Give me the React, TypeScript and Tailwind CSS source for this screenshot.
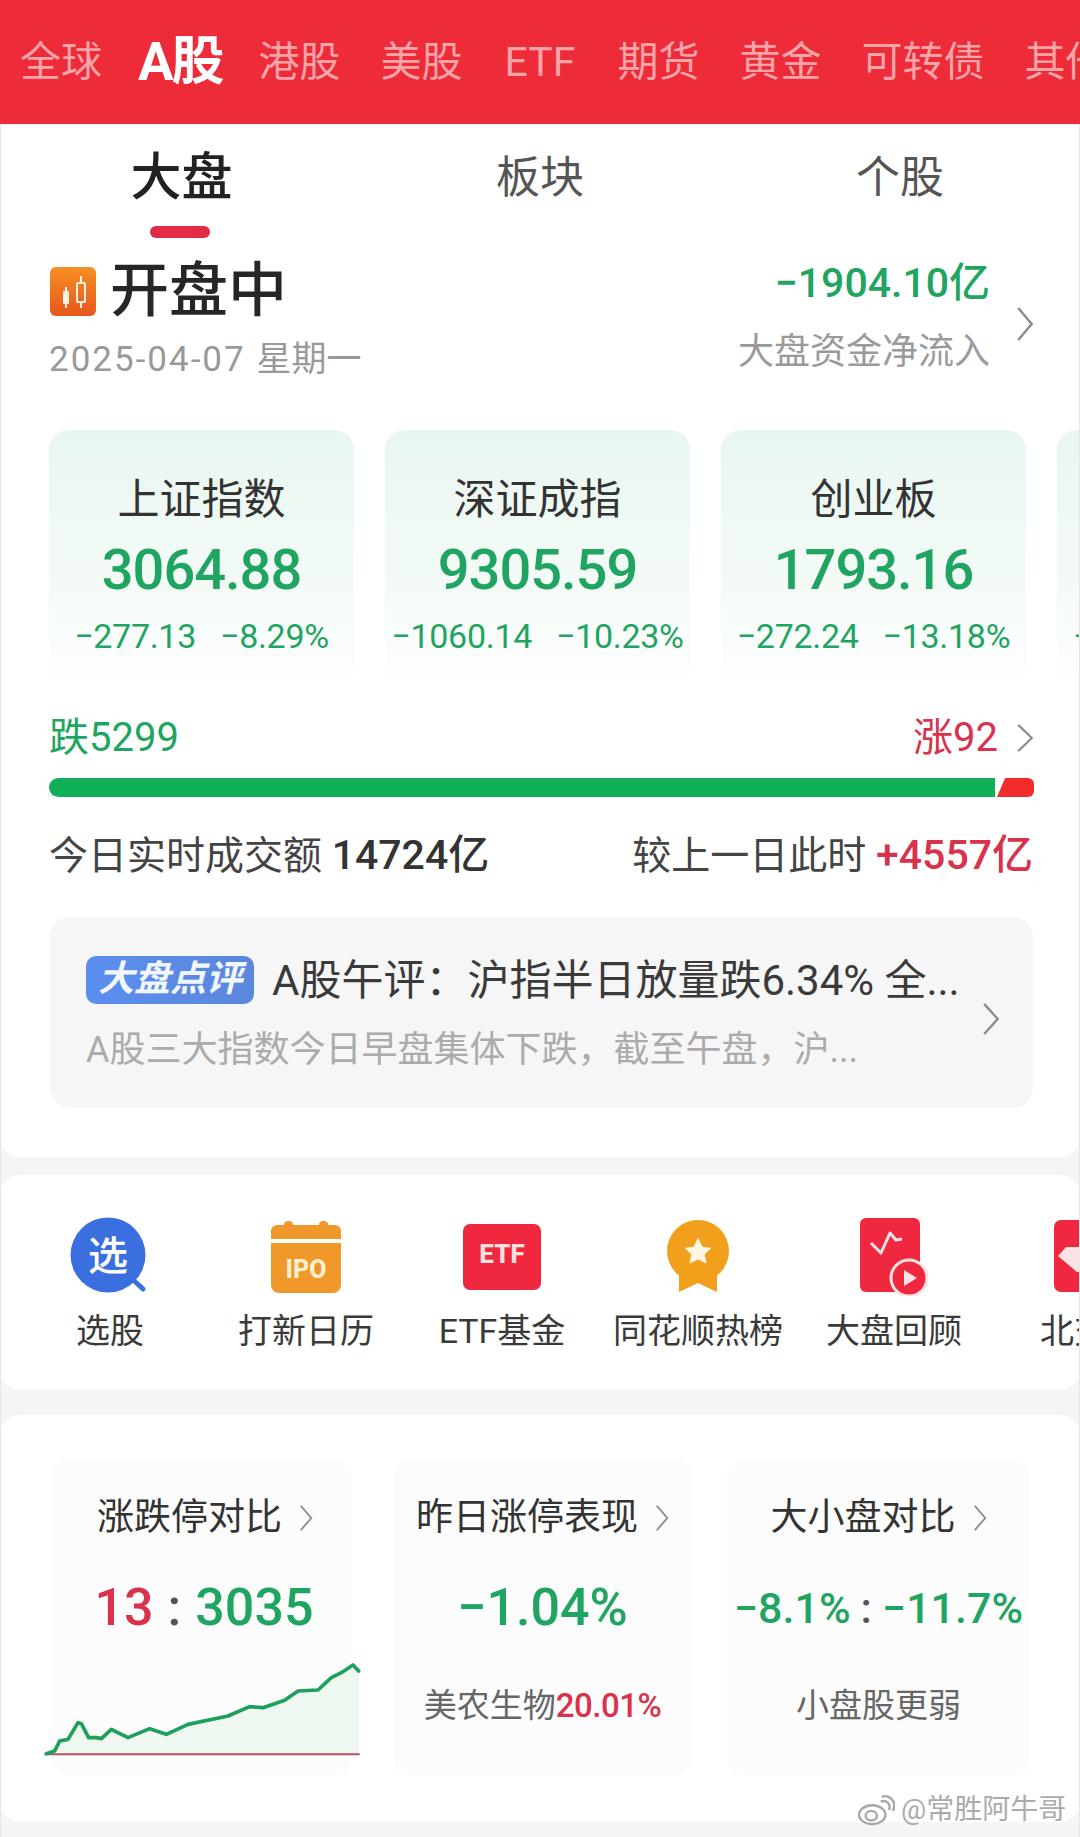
import React from "react";

const GREEN = "text-[#1fa561]";
const RED = "text-[#d8324c]";

function Chevron({ className = "" }: { className?: string }) {
  return (
    <svg viewBox="0 0 16 32" className={className} fill="none" stroke="#8d8d8d" strokeWidth="2.2" preserveAspectRatio="none">
      <polyline points="2,1 14,16 2,31" />
    </svg>
  );
}

const markets = ["全球", "A股", "港股", "美股", "ETF", "期货", "黄金", "可转债", "其他"];

const indices = [
  { name: "上证指数", value: "3064.88", change: "−277.13", pct: "−8.29%" },
  { name: "深证成指", value: "9305.59", change: "−1060.14", pct: "−10.23%" },
  { name: "创业板", value: "1793.16", change: "−272.24", pct: "−13.18%" },
  { name: "科创50", value: "", change: "−", pct: "" },
];

function CandleIcon() {
  return (
    <svg viewBox="0 0 46 49" className="w-[48px] h-[49px] shrink-0">
      <defs>
        <linearGradient id="candle" x1="0" y1="0" x2="0" y2="1">
          <stop offset="0" stopColor="#f59025" />
          <stop offset="1" stopColor="#e8561c" />
        </linearGradient>
      </defs>
      <rect width="46" height="49" rx="6" fill="url(#candle)" />
      <rect x="13" y="24" width="6" height="13" rx="1" fill="#fff3e0" />
      <rect x="15" y="20" width="2" height="21" fill="#fff3e0" />
      <rect x="27" y="16" width="8" height="19" rx="1" fill="none" stroke="#fff3e0" strokeWidth="2" />
      <rect x="30" y="9" width="2" height="7" fill="#fff3e0" />
      <rect x="30" y="35" width="2" height="6" fill="#fff3e0" />
    </svg>
  );
}

function SelectIcon() {
  return (
    <svg viewBox="0 0 80 80" className="w-[80px] h-[80px]">
      <line x1="60" y1="60" x2="73" y2="72" stroke="#3b6fe0" strokeWidth="5" strokeLinecap="round" />
      <circle cx="38" cy="38" r="37.5" fill="#3b6fe0" />
      <text x="38" y="53" textAnchor="middle" fontSize="40" fontWeight="500" fill="#fff" fontFamily="'Noto Sans CJK SC', sans-serif">
        选
      </text>
    </svg>
  );
}

function IpoIcon() {
  return (
    <svg viewBox="0 0 70 72" className="w-[70px] h-[72px]">
      <rect x="13" y="0" width="9" height="10" rx="4" fill="#f0982a" />
      <rect x="48" y="0" width="9" height="10" rx="4" fill="#f0982a" />
      <path d="M6 4 H64 A6 6 0 0 1 70 10 V18 H0 V10 A6 6 0 0 1 6 4Z" fill="#f0982a" />
      <path d="M0 22 H70 V64 A8 8 0 0 1 62 72 H8 A8 8 0 0 1 0 64Z" fill="#f0982a" />
      <text x="35" y="57" textAnchor="middle" fontSize="25" fontWeight="800" fill="#fdf0cf" fontFamily="Roboto, sans-serif">
        IPO
      </text>
    </svg>
  );
}

function EtfIcon() {
  return (
    <svg viewBox="0 0 78 66" className="w-[78px] h-[66px]">
      <rect width="78" height="66" rx="7" fill="#f0283f" />
      <text x="39" y="39" textAnchor="middle" fontSize="26" fontWeight="800" fill="#fbe0e0" fontFamily="Roboto, sans-serif">
        ETF
      </text>
    </svg>
  );
}

function MedalIcon() {
  return (
    <svg viewBox="0 0 62 74" className="w-[62px] h-[74px]">
      <path d="M12 50 L12 72 L31 63 L50 72 L50 50Z" fill="#f29f1c" />
      <circle cx="31" cy="31" r="31" fill="#f29f1c" />
      <path
        d="M31 15 L36 26 L47 27.5 L39 35 L41 46 L31 41 L21 46 L23 35 L15 27.5 L26 26Z"
        fill="#fdf6e3"
        stroke="#fdf6e3"
        strokeLinejoin="round"
        strokeWidth="1"
        transform="translate(6.2 6.2) scale(0.8)"
      />
    </svg>
  );
}

function ReplayIcon() {
  return (
    <svg viewBox="0 0 68 78" className="w-[68px] h-[78px]">
      <rect width="60" height="74" rx="6" fill="#f0283f" />
      <polyline points="11,25 21,35 30,15 36,22 42,21" fill="none" stroke="#fde3e3" strokeWidth="3" strokeLinejoin="round" />
      <circle cx="49" cy="60" r="18" fill="#f0283f" stroke="#fde3e3" strokeWidth="3" />
      <path d="M44 52 L57 60 L44 68Z" fill="#fde3e3" />
    </svg>
  );
}

function NorthIcon() {
  return (
    <svg viewBox="0 0 26 72" className="w-[26px] h-[72px] shrink-0">
      <rect width="70" height="72" rx="7" fill="#f0283f" />
      <path d="M12 27 H34 V52 L23 52 L4 36Z" fill="#fde3e3" />
    </svg>
  );
}

const shortcuts = [
  { label: "选股", icon: <SelectIcon /> },
  { label: "打新日历", icon: <IpoIcon /> },
  { label: "ETF基金", icon: <EtfIcon /> },
  { label: "同花顺热榜", icon: <MedalIcon /> },
  { label: "大盘回顾", icon: <ReplayIcon /> },
];

// Limit-up count through the session, in the chart's own 350x130 box (3x units)
const limitLine =
  "55,338 80,330 95,300 120,295 150,245 160,248 182,290 205,290 220,293 250,265 300,290 365,263 415,280 480,250 600,225 665,197 705,200 770,178 810,150 870,147 910,110 940,95 975,72 992,90";

function App() {
  return (
    <div
      className="relative w-[1080px] h-[1837px] overflow-hidden bg-[#f5f5f5] flex flex-col"
      style={{ fontFamily: "Roboto, 'Noto Sans CJK SC', sans-serif" }}
    >
      <header className="h-[124px] shrink-0 bg-[#ee2b39] flex items-center pl-[20px] gap-[40px] whitespace-nowrap">
        {markets.map((m) =>
          m === "A股" ? (
            <span key={m} className="-mx-[4px] text-[53px] leading-[60px] font-bold text-white tracking-[-2px]">
              {m}
            </span>
          ) : (
            <span key={m} className={`text-[41px] leading-[50px] text-[#f9a4a8] ${m === "ETF" ? "px-[2px]" : ""}`}>
              {m}
            </span>
          ),
        )}
      </header>

      <section className="h-[1033px] shrink-0 bg-white rounded-b-[20px]">
        <div className="grid grid-cols-3 pt-[24px]">
          <div className="flex flex-col items-center">
            <span className="ml-[3px] text-[51px] leading-[60px] font-medium text-[#222]">大盘</span>
            <span className="mt-[18px] h-[12px] w-[60px] rounded-full bg-[#e32b45]" />
          </div>
          <span className="text-center text-[44px] leading-[60px] text-[#555]">板块</span>
          <span className="text-center text-[44px] leading-[60px] text-[#555]">个股</span>
        </div>

        <div className="mt-[20px] pl-[49px] pr-[46px] flex justify-between">
          <div>
            <div className="flex items-center gap-[13px] h-[66px]">
              <CandleIcon />
              <span className="text-[59px] leading-[60px] font-medium text-[#262626]">开盘中</span>
            </div>
            <div className="mt-[18px] text-[35px] leading-[36px] text-[#999] whitespace-nowrap">
              <span className="tracking-[2px]">2025-04-07</span> <span className="ml-[2px]">星期一</span>
            </div>
          </div>
          <div className="flex items-center gap-[26px]">
            <div className="text-right -mt-[3px]">
              <div className={`text-[41px] leading-[42px] font-medium ${GREEN}`}>−1904.10亿</div>
              <div className="mt-[28px] text-[36px] leading-[40px] text-[#9a9a9a]">大盘资金净流入</div>
            </div>
            <Chevron className="w-[18px] h-[34px] mt-[12px]" />
          </div>
        </div>

        <div className="mt-[52px] pl-[49px] flex gap-[31px] overflow-hidden">
          {indices.map((c) => (
            <div
              key={c.name}
              className="w-[305px] h-[263px] shrink-0 rounded-t-[20px] bg-linear-to-b from-[#e9f6ef] via-[#f4fbf7] via-60% to-white flex flex-col items-center whitespace-nowrap"
            >
              {c.value ? (
                <>
                  <div className="mt-[48px] text-[42px] leading-[44px] text-[#333]">{c.name}</div>
                  <div className={`mt-[18px] text-[56px] leading-[60px] font-medium tracking-[-1px] ${GREEN}`}>{c.value}</div>
                  <div className={`mt-[18px] flex gap-[24px] text-[34px] leading-[36px] tracking-[-0.3px] ${GREEN}`}>
                    <span>{c.change}</span>
                    <span>{c.pct}</span>
                  </div>
                </>
              ) : (
                <div className={`mt-[188px] self-start pl-[16px] text-[34px] leading-[36px] ${GREEN}`}>{c.change}</div>
              )}
            </div>
          ))}
        </div>

        <div className="mt-[25px] pl-[49px] pr-[46px] flex items-center justify-between">
          <span className={`text-[40px] leading-[40px] ${GREEN}`}>跌5299</span>
          <div className="flex items-center gap-[18px]">
            <span className={`text-[40px] leading-[40px] ${RED}`}>涨92</span>
            <Chevron className="w-[18px] h-[28px]" />
          </div>
        </div>

        <div className="mt-[20px] ml-[49px] mr-[46px] h-[19px] flex gap-[2px]">
          <div className="w-[946px] rounded-l-full bg-[#0fae58]" />
          <div className="w-[37px] bg-[#f42b2b] rounded-r-[6px] [clip-path:polygon(22%_0,100%_0,100%_100%,0_100%)]" />
        </div>

        <div className="mt-[38px] pl-[49px] pr-[47px] flex items-center justify-between text-[39px] leading-[40px] whitespace-nowrap">
          <div className="text-[#444]">
            今日实时成交额 <span className="text-[41px] font-medium text-[#333]">14724亿</span>
          </div>
          <div className="text-[#444]">
            较上一日此时 <span className={`text-[41px] font-medium ${RED}`}>+4557亿</span>
          </div>
        </div>

        <div className="mt-[41px] ml-[50px] mr-[47px] h-[191px] rounded-[20px] bg-[#f6f6f6] pl-[36px] pr-[33px] flex items-center">
          <div className="flex-1 min-w-0">
            <div className="flex items-center gap-[18px] whitespace-nowrap">
              <span className="h-[48px] w-[168px] shrink-0 rounded-[10px] bg-linear-to-r from-[#5a8eef] to-[#5b87dc] text-center text-[36px] leading-[46px] font-bold italic text-[#f2f6ff]">
                大盘点评
              </span>
              <span className="mt-[2px] text-[42px] leading-[46px] text-[#3a3a3a]">A股午评：沪指半日放量跌6.34% 全...</span>
            </div>
            <div className="mt-[26px] text-[36px] leading-[40px] text-[#ababab] whitespace-nowrap">
              A股三大指数今日早盘集体下跌，截至午盘，沪...
            </div>
          </div>
          <Chevron className="w-[18px] h-[32px] mt-[12px] shrink-0" />
        </div>
      </section>

      <section className="mt-[18px] h-[215px] shrink-0 bg-white rounded-[20px] pl-[12px] flex items-start whitespace-nowrap">
        {shortcuts.map((s) => (
          <div key={s.label} className="w-[196px] shrink-0 flex flex-col items-center">
            <div className="mt-[42px] h-[80px] flex items-center justify-center">{s.icon}</div>
            <span className="mt-[14px] text-[34px] leading-[40px] text-[#3a3a3a]">{s.label}</span>
          </div>
        ))}
        <div className="ml-[48px] shrink-0 flex flex-col">
          <div className="mt-[45px] ml-[14px] h-[80px]">
            <NorthIcon />
          </div>
          <span className="mt-[11px] text-[34px] leading-[40px] text-[#3a3a3a]">北交所</span>
        </div>
      </section>

      <section className="mt-[25px] h-[407px] shrink-0 bg-white rounded-[20px] pt-[45px] pl-[52px] flex">
        <div className="w-[300px] h-[315px] rounded-[16px] bg-[#fcfcfc] flex flex-col items-center">
          <div className="mt-[36px] ml-[6px] flex items-center gap-[17px] text-[37px] leading-[44px] text-[#333]">
            涨跌停对比
            <Chevron className="w-[14px] h-[26px]" />
          </div>
          <div className="mt-[38px] ml-[4px] text-[52px] leading-[60px] font-medium whitespace-nowrap flex items-center gap-[14px]">
            <span className={RED}>13</span>
            <span className="text-[#555]">:</span>
            <span className={GREEN}>3035</span>
          </div>
          <svg viewBox="0 0 1050 390" className="w-[350px] h-[130px] ml-[1px] mt-[3px] shrink-0">
            <polygon points={`${limitLine} 992,340 55,340`} fill="#eef8f1" />
            <line x1="50" y1="340" x2="995" y2="340" stroke="#b8505f" strokeWidth="6" />
            <polyline points={limitLine} fill="none" stroke="#1f9f5c" strokeWidth="11" strokeLinejoin="round" strokeLinecap="round" />
          </svg>
        </div>

        <div className="ml-[41px] w-[299px] h-[315px] rounded-[16px] bg-[#fcfcfc] flex flex-col items-center whitespace-nowrap">
          <div className="mt-[36px] flex items-center gap-[17px] text-[37px] leading-[44px] text-[#333]">
            昨日涨停表现
            <Chevron className="w-[14px] h-[26px]" />
          </div>
          <div className={`mt-[38px] text-[52px] leading-[60px] font-medium ${GREEN}`}>−1.04%</div>
          <div className="mt-[48px] text-[33px] leading-[40px] text-[#666]">
            美农生物<span className={`text-[33px] font-medium tracking-[-0.5px] ${RED}`}>20.01%</span>
          </div>
        </div>

        <div className="ml-[35px] w-[303px] h-[315px] rounded-[16px] bg-[#fcfcfc] flex flex-col items-center whitespace-nowrap">
          <div className="mt-[36px] flex items-center gap-[17px] text-[37px] leading-[44px] text-[#333]">
            大小盘对比
            <Chevron className="w-[14px] h-[26px]" />
          </div>
          <div className={`mt-[38px] text-[43px] leading-[60px] font-medium flex items-center gap-[10px] ${GREEN}`}>
            <span>−8.1%</span>
            <span className="text-[#555]">:</span>
            <span>−11.7%</span>
          </div>
          <div className="mt-[48px] text-[33px] leading-[40px] text-[#666]">小盘股更弱</div>
        </div>
      </section>

      {/* Hairline down both sides of the white sheets */}
      <div className="absolute left-0 right-0 top-[124px] bottom-0 border-x border-[#e6e6e6] pointer-events-none" />

      {/* Weibo account mark sitting over the lower corner */}
      <div className="absolute left-[857px] top-[1793px] flex items-center gap-[6px] whitespace-nowrap text-[#ababab] text-[28px] leading-[34px]">
        <svg viewBox="0 0 40 34" className="w-[38px] h-[32px]" fill="none" stroke="#a8a8a8" strokeWidth="2.5">
          <ellipse cx="16" cy="22" rx="14" ry="10" />
          <ellipse cx="15" cy="23" rx="6" ry="5" />
          <path d="M25 8 C31 6 36 10 34 17" />
          <path d="M26 3 C35 0 42 8 38 18" />
        </svg>
        <span>@常胜阿牛哥</span>
      </div>
    </div>
  );
}

export default App;
